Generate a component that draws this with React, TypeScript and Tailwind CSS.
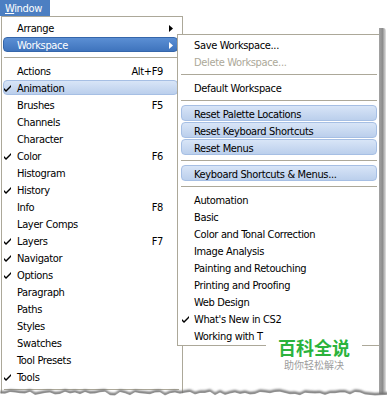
import React from "react";

type Item =
  | { sep: true }
  | {
      sep?: false;
      label: string;
      shortcut?: string;
      arrow?: boolean;
      checked?: boolean;
      active?: boolean;
      hover?: boolean;
      disabled?: boolean;
    };

const windowItems: Item[] = [
  { label: "Arrange", arrow: true },
  { label: "Workspace", arrow: true, active: true },
  { sep: true },
  { label: "Actions", shortcut: "Alt+F9" },
  { label: "Animation", checked: true, hover: true },
  { label: "Brushes", shortcut: "F5" },
  { label: "Channels" },
  { label: "Character" },
  { label: "Color", shortcut: "F6", checked: true },
  { label: "Histogram" },
  { label: "History", checked: true },
  { label: "Info", shortcut: "F8" },
  { label: "Layer Comps" },
  { label: "Layers", shortcut: "F7", checked: true },
  { label: "Navigator", checked: true },
  { label: "Options", checked: true },
  { label: "Paragraph" },
  { label: "Paths" },
  { label: "Styles" },
  { label: "Swatches" },
  { label: "Tool Presets" },
  { label: "Tools", checked: true },
  { sep: true },
];

const workspaceItems: Item[] = [
  { label: "Save Workspace..." },
  { label: "Delete Workspace...", disabled: true },
  { sep: true },
  { label: "Default Workspace" },
  { sep: true },
  { label: "Reset Palette Locations", hover: true },
  { label: "Reset Keyboard Shortcuts", hover: true },
  { label: "Reset Menus", hover: true },
  { sep: true },
  { label: "Keyboard Shortcuts & Menus...", hover: true },
  { sep: true },
  { label: "Automation" },
  { label: "Basic" },
  { label: "Color and Tonal Correction" },
  { label: "Image Analysis" },
  { label: "Painting and Retouching" },
  { label: "Printing and Proofing" },
  { label: "Web Design" },
  { label: "What's New in CS2", checked: true },
  { label: "Working with T" },
];

function Check({ white }: { white?: boolean }) {
  return (
    <svg width="7" height="7" viewBox="0 0 7 7">
      <path d="M0 3 L2 5 L7 0 L7 2 L2 7 L0 5 Z" fill={white ? "#fff" : "#000"} />
    </svg>
  );
}

function Arrow({ white }: { white?: boolean }) {
  return (
    <svg width="4" height="7" viewBox="0 0 4 7">
      <polygon points="0,0 4,3.5 0,7" fill={white ? "#fff" : "#000"} />
    </svg>
  );
}

// jagged tear along the bottom edge
function tearPoints() {
  const pts: [number, number][] = [];
  let seed = 7;
  const rnd = () => {
    seed = (seed * 9301 + 49297) % 233280;
    return seed / 233280;
  };
  for (let x = 0; x <= 390; x += 5) {
    pts.push([x, 5 + rnd() * 4]);
  }
  return pts;
}
const tear = tearPoints();
const tearLine = tear.map(([x, y]) => `${x},${y.toFixed(1)}`).join(" ");
const tearLow = tear
  .slice()
  .reverse()
  .map(([x, y]) => `${x},${(y + 3).toFixed(1)}`)
  .join(" ");
const tearWhite = tear.map(([x, y]) => `${x},${(y + 2.5).toFixed(1)}`).join(" ");

function MenuRow({ item, sub }: { item: Item; sub?: boolean }) {
  if (item.sep) {
    return (
      <div className={`h-[9px] flex items-center ${sub ? "ml-[3px] mr-[3px]" : "ml-[2px] mr-[3px]"}`}>
        <div className="h-px w-full bg-[#aca899]" />
      </div>
    );
  }
  const box = item.active
    ? "bg-linear-to-b from-[#5b8fd4] to-[#3f74bd] border-[#3566aa] text-white"
    : item.hover
      ? "bg-linear-to-b from-[#d8e5f7] to-[#bbcfec] border-[#a6bfe4]"
      : "border-transparent";
  return (
    <div className={`h-[17px] ${sub ? "ml-[3px] mr-[3px] pb-px" : "ml-px mr-[4px] py-px"}`}>
      <div className={`h-full flex items-center pt-[2px] rounded-[4px] border ${box}`}>
        <div className={`${sub ? "w-[12px]" : "w-[13px]"} flex items-center`}>
          {item.checked && <Check white={item.active} />}
        </div>
        <span className={`flex-1 whitespace-nowrap ${item.disabled ? "text-[#aca899]" : ""}`}>
          {item.label}
        </span>
        {item.shortcut && <span className="whitespace-nowrap">{item.shortcut}</span>}
        <div className="w-[14px] pl-[6px] flex items-center">
          {item.arrow && <Arrow white={item.active} />}
        </div>
      </div>
    </div>
  );
}

export default function App() {
  return (
    <div
      className="relative w-[387px] h-[400px] bg-white text-[11px] leading-[11px] tracking-[-0.35px] text-black overflow-hidden"
      style={{ fontFamily: '"DejaVu Sans Condensed", "Liberation Sans", sans-serif', fontStretch: "condensed" }}
    >
      <div className="relative w-[379px] h-[400px] overflow-hidden">
        {/* menu bar title */}
        <div className="w-[50px] h-[16px] bg-[#4c7fc2] text-white flex items-center pl-[5px] pt-px">
          <span>
            <span className="underline">W</span>indow
          </span>
        </div>

        {/* Window menu */}
        <div className="ml-px w-[182px] h-[390px] border border-[#aca899] bg-white pt-[2px]">
          {windowItems.map((it, i) => (
            <MenuRow key={i} item={it} />
          ))}
        </div>

        {/* Workspace submenu */}
        <div className="absolute left-[177px] top-[34px] w-[204px] border border-[#aca899] bg-white pt-px pb-px">
          {workspaceItems.map((it, i) => (
            <MenuRow key={i} item={it} sub />
          ))}
        </div>

        {/* watermark */}
        <div
          className="absolute left-[266px] top-[338px] w-[96px] h-[36px] bg-white flex flex-col items-center gap-[2px] tracking-normal"
          style={{ fontFamily: '"Noto Sans CJK SC", sans-serif' }}
        >
          <span className="text-[18px] leading-[19px] font-bold text-[#2bb33c]">百科全说</span>
          <span className="text-[10px] leading-[11px] text-[#9c9c9c]">助你轻松解决</span>
        </div>
      </div>

      {/* right shadow */}
      <div className="absolute left-[379px] top-[28px] w-[7px] h-[366px] bg-linear-to-r from-[#a3a3a3] via-[#8d8d8d] to-[#e4e4e4] rounded-tr-[3px]" />

      {/* torn bottom edge */}
      <svg className="absolute left-0 top-[384px]" width="387" height="16" viewBox="0 0 387 16">
        <defs>
          <filter id="blur" x="-5%" y="-50%" width="110%" height="200%">
            <feGaussianBlur stdDeviation="0.9" />
          </filter>
        </defs>
        <polygon points={`${tearLine} ${tearLow}`} fill="#6f6f6f" filter="url(#blur)" />
        <polygon points={`${tearWhite} 390,16 0,16`} fill="#fff" />
      </svg>
    </div>
  );
}
